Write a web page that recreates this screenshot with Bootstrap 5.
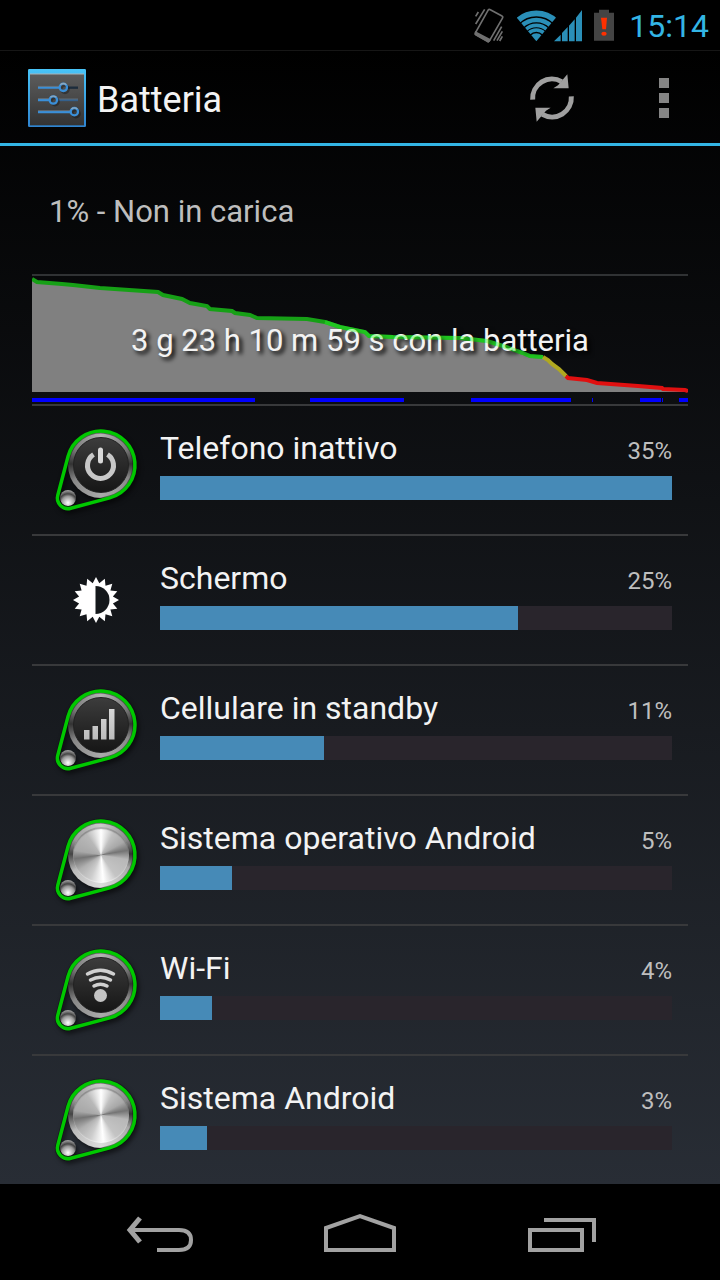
<!DOCTYPE html>
<html lang="it">
<head>
  <meta charset="UTF-8">
  <title>Batteria</title>
  <meta name="viewport" content="width=device-width, initial-scale=1">
  <link href="https://cdn.jsdelivr.net/npm/bootstrap@5.3.0/dist/css/bootstrap.min.css" rel="stylesheet">
  <style>
    body {
      font-family: Roboto, "Liberation Sans", sans-serif;
      font-size: 32px;
      line-height: 36px;
      color: #f3f3f3;
      background: #000;
    }
    svg { display: block; flex-shrink: 0; }

    .status-bar {
      height: 50px;
      padding-right: 11px;
      color: #33b5e5;
    }
    .signal-icons { margin-left: 13px; }
    .status-time { margin-left: 15px; padding-top: 2px; }

    .screen { background: linear-gradient(#000, #282d35); }
    .action-bar {
      height: 96px;
      padding: 2px 28px 0;
      border-top: 1px solid #161616;
      border-bottom: 3px solid #33b5e5;
    }
    .action-title {
      padding: 4px 0 0 11px;
      font-size: 36px;
      line-height: 40px;
    }
    .action-btn { width: 56px; }
    .overflow-btn { margin-left: 56px; }

    .page-body { padding: 0 32px; }
    .charge-state {
      height: 128px;
      padding: 4px 17px 0;
      font-size: 31px;
      color: #bebebe;
    }

    .history {
      display: grid;
      border-top: 2px solid #303234;
    }
    .history > * { grid-area: 1 / 1; }
    .history svg { width: 100%; height: 128px; }
    .history-label {
      align-self: center;
      padding-top: 2px;
      text-align: center;
      font-size: 31px;
      text-shadow: 3px 3px 4px #000;
    }
    .history-line { fill: none; stroke-width: 4; }

    .usage-item {
      display: flex;
      gap: 24px;
      height: 130px;
      padding: 24px 16px 0 24px;
      border-top: 2px solid #38393b;
      color: inherit;
      text-decoration: none;
    }
    .usage-share { font-size: 24px; color: #bebebe; }
    .usage-bar {
      height: 24px;
      margin-top: 7px;
      border-radius: 0;
      background: #29252c;
    }
    .usage-bar .progress-bar { background: #468ab7; }

    /* metal knob: ring, disc and glyph share one grid cell */
    .knob {
      display: grid;
      width: 80px;
      height: 80px;
      flex-shrink: 0;
      filter: drop-shadow(2px 3px 2px #0008);
    }
    .knob > * { grid-area: 1 / 1; }
    .knob svg { overflow: visible; }
    .knob-ring {
      width: 66px;
      height: 66px;
      margin: 2px 0 0 12px;
      border-radius: 50%;
      background: conic-gradient(#b4b4b4, #777 60deg, #333 88deg, #888 115deg, #aaa 180deg, #888 240deg, #333 272deg, #777 300deg, #b4b4b4);
    }
    .knob-disc {
      width: 56px;
      height: 56px;
      margin: 7px 0 0 17px;
      border: 1px solid #222;
      border-radius: 50%;
      background: linear-gradient(#3c3c3c, #161616);
    }
    .knob-metal .knob-ring {
      background: conic-gradient(#ccc, #888 60deg, #333 88deg, #aaa 115deg, #ddd 180deg, #bbb 240deg, #444 272deg, #999 300deg, #ccc);
    }
    .knob-metal .knob-disc {
      border: 0;
      box-shadow: inset 0 2px 1px #6668, inset 0 -1px 1px #fff6;
      background: conic-gradient(#fff, #c0c0c0 30deg, #a8a8a8 60deg, #747474 80deg, #b8b8b8 100deg, #c4c4c4 145deg, #fff 175deg, #ccc 205deg, #b0b0b0 235deg, #747474 262deg, #a8a8a8 280deg, #b8b8b8 325deg, #fff);
    }

    .nav-keys { height: 96px; padding: 0 124px; }
    .nav-keys svg { fill: none; stroke: #a2a2a2; stroke-width: 4; }
  </style>
</head>
<body class="d-flex flex-column min-vh-100">

  <!-- shared shapes -->
  <svg width="0" height="0" class="position-absolute" aria-hidden="true">
    <defs>
      <radialGradient id="ball" cx=".5" cy=".8" r=".8">
        <stop offset="0" stop-color="#fff"/>
        <stop offset=".5" stop-color="#999"/>
        <stop offset=".7" stop-color="#444"/>
        <stop offset="1" stop-color="#aaa"/>
      </radialGradient>
      <linearGradient id="glyph" x1="0" y1="0" x2="0" y2="1">
        <stop offset="0" stop-color="#d8d8d8"/>
        <stop offset="1" stop-color="#bcbcbc"/>
      </linearGradient>
      <linearGradient id="plate" x1="0" y1="0" x2="0" y2="1">
        <stop offset="0" stop-color="#5c5c5c"/>
        <stop offset="1" stop-color="#333"/>
      </linearGradient>
      <linearGradient id="edge" x1="0" y1="0" x2="0" y2="1">
        <stop offset="0" stop-color="#48c4f8"/>
        <stop offset="1" stop-color="#2f84d0"/>
      </linearGradient>
      <clipPath id="fan"><path d="M229 122L166 46V20H292V46Z"/></clipPath>
    </defs>
    <g id="belt">
      <circle cx="12" cy="68" r="8" fill="url(#ball)" stroke="none"/>
      <path d="M1.8 65.3L12.1 26.3A34 34 0 1 1 53.7 67.9L14.7 78.2A10.5 10.5 0 0 1 1.8 65.3Z" fill="none" stroke="#0c0c0c" stroke-width="5" opacity=".5"/>
      <path d="M1.8 65.3L12.1 26.3A34 34 0 1 1 53.7 67.9L14.7 78.2A10.5 10.5 0 0 1 1.8 65.3Z" fill="none" stroke="#00c800" stroke-width="3.5"/>
    </g>
    <g id="history-lines" class="history-line">
      <path stroke="#16a016" d="M0 3L5 6L30 8L41 9L68 12L126 16L131 19L150 23L158 27L175 30L178 33L200 35L203 37L218 39L225 42L275 43L293 46L308 51L333 56L337 60L361 61L428 62L455 65L471 70L491 77L498 80L511 81"/>
      <path stroke="#b0a820" d="M511 81L516 84L520 88L527 93L534 100"/>
      <path stroke="#e01010" d="M534 100L536 102L555 104L565 107L606 110L630 112L631 113L653 114L656 115"/>
    </g>
    <g id="history-glow" class="history-line">
      <path stroke="#30ff30" d="M293 46L308 51L333 56L337 60L361 61L428 62L455 65L471 70L491 77L498 80L511 81"/>
    </g>
  </svg>

  <header class="status-bar d-flex align-items-center justify-content-end">
    <svg width="30" height="35" viewBox="41 22 90 105" fill="none" stroke="#707070" stroke-width="5">
      <path d="M83 29Q86 25 90 27L125 46Q129 48 126 53L88 119Q85 125 81 122L48 103Q43 100 46 95Z"/>
      <path d="M46 95L89 117L84 123L45 101Z" fill="#707070"/>
      <path d="M54 34L46 47M73 26L46 70M124 78L100 120M126 92L110 120M126 107L118 121"/>
    </svg>
    <svg class="signal-icons" width="65" height="35" viewBox="171 22 195 105" fill="#2a8fb8">
      <g clip-path="url(#fan)" stroke="#2a8fb8">
        <circle cx="229" cy="121" r="23" stroke="none"/>
        <g fill="none" stroke-width="11">
          <circle cx="229" cy="121" r="33"/>
          <circle cx="229" cy="121" r="47"/>
          <circle cx="229" cy="121" r="63" stroke-width="13"/>
          <circle cx="229" cy="121" r="83" stroke-width="17"/>
        </g>
      </g>
      <path d="M282 122L302 102V122ZM306 122V97L323 79V122ZM327 122V75L344 56V122ZM348 122V51L366 28V122Z"/>
    </svg>
    <svg class="ms-2" width="24" height="35" viewBox="390 22 72 105">
      <path d="M402 36H417V27H447V36H462V120H402Z" fill="#444"/>
      <path d="M423 51H441L438 86H427Z" fill="#ff3000"/>
      <ellipse cx="432" cy="99" rx="8" ry="6" fill="#ff3000"/>
    </svg>
    <span class="status-time">15:14</span>
  </header>

  <div class="screen flex-grow-1">
    <div class="action-bar d-flex align-items-center">
      <svg width="58" height="58" viewBox="84 56 174 174">
        <rect x="84" y="56" width="174" height="174" rx="4" fill="url(#edge)"/>
        <rect x="90" y="71" width="162" height="154" fill="url(#plate)"/>
        <path d="M90 71H252" stroke="#a8b4b8" stroke-width="3"/>
        <g fill="none" stroke-width="7">
          <path d="M114 112H178M114 149H148M114 185H211" stroke="#3a8fd8"/>
          <path d="M203 112H234" stroke="#1c2c3c"/>
          <path d="M173 149H234" stroke="#34608c"/>
          <path d="M114 108H178M114 145H148M114 181H211M173 146H234" stroke="#777" stroke-width="2"/>
          <g stroke="#111" opacity=".4"><circle cx="195" cy="117" r="11"/><circle cx="165" cy="154" r="11"/><circle cx="228" cy="190" r="11"/></g>
          <g stroke="#3a8fd8"><circle cx="190" cy="111" r="11"/><circle cx="160" cy="149" r="11"/><circle cx="223" cy="184" r="11"/></g>
          <path d="M181 103Q190 96 199 103M151 141Q160 134 169 141M214 176Q223 169 232 176" stroke="#8fa8bc" stroke-width="4"/>
        </g>
      </svg>
      <h1 class="action-title fw-normal mb-0 me-auto">Batteria</h1>
      <button type="button" class="btn action-btn p-0 border-0" aria-label="Aggiorna">
        <svg class="mx-auto" width="46" height="50" viewBox="208 220 138 150">
          <g id="turn">
            <path d="M219 300A58 58 0 0 1 306 246" fill="none" stroke="#a0a0a0" stroke-width="15"/>
            <path d="M323 224L327 266L281 266L295 257Z" fill="#a0a0a0"/>
          </g>
          <use href="#turn" transform="rotate(180 277 295)"/>
        </svg>
      </button>
      <button type="button" class="btn action-btn overflow-btn p-0 border-0" aria-label="Altre opzioni">
        <svg class="mx-auto" width="10" height="40" viewBox="0 0 10 40" fill="#858585">
          <path d="M0 0H10V10H0ZM0 15H10V25H0ZM0 30H10V40H0Z"/>
        </svg>
      </button>
    </div>

    <main class="page-body">
      <div class="charge-state d-flex align-items-center">1% - Non in carica</div>

      <div class="history">
        <svg viewBox="0 0 656 128" preserveAspectRatio="none">
          <path fill="#808080" d="M0 116V3L5 6L30 8L41 9L68 12L126 16L131 19L150 23L158 27L175 30L178 33L200 35L203 37L218 39L225 42L275 43L293 46L308 51L333 56L337 60L361 61L428 62L455 65L471 70L491 77L498 80L511 81L516 84L520 88L527 93L534 100L536 102L555 104L565 107L606 110L630 112L656 115V116Z"/>
          <use href="#history-lines"/>
          <path fill="#00f" d="M0 122H223V126H0ZM278 122H372V126H278ZM439 122H539V126H439ZM560 122H561V126H560ZM608 122H629V126H608ZM630 122H631V126H630ZM647 122H656V126H647Z"/>
        </svg>
        <div class="history-label">3 g 23 h 10 m 59 s con la batteria</div>
        <svg viewBox="0 0 656 128" preserveAspectRatio="none" opacity=".4">
          <use href="#history-glow"/>
        </svg>
      </div>

      <a href="#" class="usage-item">
        <span class="knob">
          <span class="knob-ring"></span>
          <span class="knob-disc"></span>
          <svg width="80" height="80" viewBox="0 0 80 80" fill="none" stroke-linecap="round">
            <use href="#belt"/>
            <path d="M37.5 24.5A13 13 0 1 0 51.5 24.5" stroke="#c8c8c8" stroke-width="5" stroke-linecap="butt"/>
            <path d="M44.5 20V31" stroke="#d8d8d8" stroke-width="5"/>
          </svg>
        </span>
        <span class="flex-grow-1">
          <span class="d-flex justify-content-between align-items-baseline">Telefono inattivo <span class="usage-share">35%</span></span>
          <span class="progress usage-bar"><span class="progress-bar" style="width: 100%"></span></span>
        </span>
      </a>

      <a href="#" class="usage-item">
        <svg width="80" height="80" viewBox="0 0 80 80">
          <path fill="#fff" d="M40 17L43.3 23.3L48.8 18.8L49.5 25.8L56.3 23.7L54.4 30.5L61.3 31.2L56.9 36.6L63 40L56.9 43.4L61.3 48.8L54.4 49.5L56.3 56.3L49.5 54.2L48.8 61.2L43.3 56.7L40 63L36.7 56.7L31.2 61.2L30.5 54.2L23.7 56.3L25.6 49.5L18.7 48.8L23.1 43.4L17 40L23.1 36.6L18.7 31.2L25.6 30.5L23.7 23.7L30.5 25.8L31.2 18.8L36.7 23.3Z"/>
          <path d="M39.5 26A14 14 0 0 1 39.5 54Z" fill="#14181b"/>
        </svg>
        <span class="flex-grow-1">
          <span class="d-flex justify-content-between align-items-baseline">Schermo <span class="usage-share">25%</span></span>
          <span class="progress usage-bar"><span class="progress-bar" style="width: 70%"></span></span>
        </span>
      </a>

      <a href="#" class="usage-item">
        <span class="knob">
          <span class="knob-ring"></span>
          <span class="knob-disc"></span>
          <svg width="80" height="80" viewBox="0 0 80 80">
            <use href="#belt"/>
            <path fill="url(#glyph)" d="M28 40H33.5V49.5H28ZM36.5 36H42V49.5H36.5ZM45 29H50.5V49.5H45ZM53 19H58.5V49.5H53Z"/>
          </svg>
        </span>
        <span class="flex-grow-1">
          <span class="d-flex justify-content-between align-items-baseline">Cellulare in standby <span class="usage-share">11%</span></span>
          <span class="progress usage-bar"><span class="progress-bar" style="width: 32%"></span></span>
        </span>
      </a>

      <a href="#" class="usage-item">
        <span class="knob knob-metal">
          <span class="knob-ring"></span>
          <span class="knob-disc"></span>
          <svg width="80" height="80" viewBox="0 0 80 80"><use href="#belt"/></svg>
        </span>
        <span class="flex-grow-1">
          <span class="d-flex justify-content-between align-items-baseline">Sistema operativo Android <span class="usage-share">5%</span></span>
          <span class="progress usage-bar"><span class="progress-bar" style="width: 14%"></span></span>
        </span>
      </a>

      <a href="#" class="usage-item">
        <span class="knob">
          <span class="knob-ring"></span>
          <span class="knob-disc"></span>
          <svg width="80" height="80" viewBox="0 0 80 80" fill="none" stroke="#d0d0d0" stroke-width="3.5" stroke-linecap="round">
            <use href="#belt"/>
            <path d="M31.5 24Q44.5 16.5 57.5 24M34.5 30Q44.5 24.5 54.5 30M38 36Q44.5 32.5 51 36"/>
            <circle cx="44.5" cy="45.5" r="6.5" fill="#c4c4c4" stroke="none"/>
          </svg>
        </span>
        <span class="flex-grow-1">
          <span class="d-flex justify-content-between align-items-baseline">Wi-Fi <span class="usage-share">4%</span></span>
          <span class="progress usage-bar"><span class="progress-bar" style="width: 10.2%"></span></span>
        </span>
      </a>

      <a href="#" class="usage-item">
        <span class="knob knob-metal">
          <span class="knob-ring"></span>
          <span class="knob-disc"></span>
          <svg width="80" height="80" viewBox="0 0 80 80"><use href="#belt"/></svg>
        </span>
        <span class="flex-grow-1">
          <span class="d-flex justify-content-between align-items-baseline">Sistema Android <span class="usage-share">3%</span></span>
          <span class="progress usage-bar"><span class="progress-bar" style="width: 9.2%"></span></span>
        </span>
      </a>
    </main>
  </div>

  <nav class="nav-keys d-flex align-items-center justify-content-between">
    <button type="button" class="btn p-0 border-0" aria-label="Indietro">
      <svg width="72" height="40" viewBox="0 0 72 40">
        <path d="M6 18H55Q67 18 67 28Q67 38 55 38H33"/>
        <path d="M16 6L6 18L16 30" stroke-width="5"/>
      </svg>
    </button>
    <button type="button" class="btn p-0 border-0" aria-label="Home">
      <svg width="72" height="40" viewBox="0 0 72 40"><path d="M2 38V16L36 4L70 16V38Z"/></svg>
    </button>
    <button type="button" class="btn p-0 border-0" aria-label="App recenti">
      <svg width="72" height="40" viewBox="0 0 72 40"><path d="M6 18H58V38H6ZM20 8H70V30"/></svg>
    </button>
  </nav>

  <script src="https://cdn.jsdelivr.net/npm/bootstrap@5.3.0/dist/js/bootstrap.bundle.min.js"></script>
</body>
</html>
